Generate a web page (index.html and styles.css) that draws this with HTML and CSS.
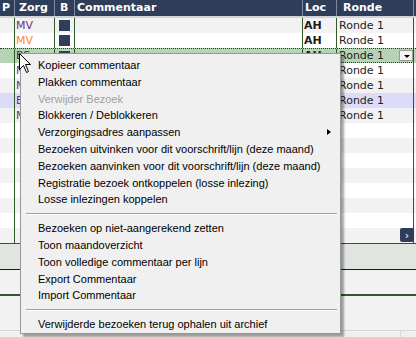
FILE: index.html
```html
<!DOCTYPE html>
<html lang="nl">
<head>
    <meta charset="UTF-8">
    <meta name="viewport" content="width=device-width, initial-scale=1.0">
    <title>Bezoeken</title>
    <link rel="stylesheet" href="styles.css">
</head>
<body>
    <div class="screen">
        <div class="grid">
            <div class="row head">
                <div class="cell c-p">P</div>
                <div class="cell c-zorg">Zorg</div>
                <div class="cell c-b">B</div>
                <div class="cell c-comm">Commentaar</div>
                <div class="cell c-loc">Loc</div>
                <div class="cell c-ronde">Ronde</div>
                <div class="cell c-fill"></div>
            </div>

            <div class="row odd">
                <div class="cell"></div>
                <div class="cell zorg purple">MV</div>
                <div class="cell box"><span class="check"></span></div>
                <div class="cell"></div>
                <div class="cell loc">AH</div>
                <div class="cell ronde">Ronde 1</div>
                <div class="cell c-fill"></div>
            </div>
            <div class="row">
                <div class="cell"></div>
                <div class="cell zorg orange">MV</div>
                <div class="cell box"><span class="check"></span></div>
                <div class="cell"></div>
                <div class="cell loc">AH</div>
                <div class="cell ronde">Ronde 1</div>
                <div class="cell c-fill"></div>
            </div>
            <div class="row selected">
                <div class="cell"></div>
                <div class="cell zorg dark">BS</div>
                <div class="cell box"><span class="check"></span></div>
                <div class="cell"></div>
                <div class="cell loc">AH</div>
                <div class="cell ronde focus">Ronde 1<span class="drop"></span></div>
                <div class="cell c-fill"></div>
            </div>
            <div class="row">
                <div class="cell"></div>
                <div class="cell zorg purple">MV</div>
                <div class="cell box"><span class="check"></span></div>
                <div class="cell"></div>
                <div class="cell loc">AH</div>
                <div class="cell ronde">Ronde 1</div>
                <div class="cell c-fill"></div>
            </div>
            <div class="row odd">
                <div class="cell"></div>
                <div class="cell zorg purple">MV</div>
                <div class="cell box"><span class="check"></span></div>
                <div class="cell"></div>
                <div class="cell loc">AH</div>
                <div class="cell ronde">Ronde 1</div>
                <div class="cell c-fill"></div>
            </div>
            <div class="row today">
                <div class="cell"></div>
                <div class="cell zorg purple">EV</div>
                <div class="cell box"><span class="check"></span></div>
                <div class="cell"></div>
                <div class="cell loc">AH</div>
                <div class="cell ronde">Ronde 1</div>
                <div class="cell c-fill"></div>
            </div>
            <div class="row odd">
                <div class="cell"></div>
                <div class="cell zorg purple">MV</div>
                <div class="cell box"><span class="check"></span></div>
                <div class="cell"></div>
                <div class="cell loc">AH</div>
                <div class="cell ronde">Ronde 1</div>
                <div class="cell c-fill"></div>
            </div>
            <div class="row"><div class="cell"></div><div class="cell"></div><div class="cell"></div><div class="cell"></div><div class="cell"></div><div class="cell"></div><div class="cell c-fill"></div></div>
            <div class="row odd"><div class="cell"></div><div class="cell"></div><div class="cell"></div><div class="cell"></div><div class="cell"></div><div class="cell"></div><div class="cell c-fill"></div></div>
            <div class="row"><div class="cell"></div><div class="cell"></div><div class="cell"></div><div class="cell"></div><div class="cell"></div><div class="cell"></div><div class="cell c-fill"></div></div>
            <div class="row odd"><div class="cell"></div><div class="cell"></div><div class="cell"></div><div class="cell"></div><div class="cell"></div><div class="cell"></div><div class="cell c-fill"></div></div>
            <div class="row"><div class="cell"></div><div class="cell"></div><div class="cell"></div><div class="cell"></div><div class="cell"></div><div class="cell"></div><div class="cell c-fill"></div></div>
            <div class="row odd"><div class="cell"></div><div class="cell"></div><div class="cell"></div><div class="cell"></div><div class="cell"></div><div class="cell"></div><div class="cell c-fill"></div></div>
            <div class="row"><div class="cell"></div><div class="cell"></div><div class="cell"></div><div class="cell"></div><div class="cell"></div><div class="cell"></div><div class="cell c-fill"></div></div>
            <div class="row odd"><div class="cell"></div><div class="cell"></div><div class="cell"></div><div class="cell"></div><div class="cell"></div><div class="cell"></div><div class="cell c-fill"></div></div>

            <button class="scroll-next">&rsaquo;</button>
        </div>

        <div class="rule-green"></div>
        <div class="panel"></div>
        <div class="rule-black"></div>
        <div class="blank"></div>
        <div class="rule-green thick"></div>
        <div class="footer">
            <div class="footer-top"></div>
            <div class="footer-bar">
                <div class="footer-main"></div>
                <div class="footer-end"></div>
            </div>
        </div>

        <!-- contextmenu -->
        <ul class="menu">
            <li>Kopieer commentaar</li>
            <li>Plakken commentaar</li>
            <li class="disabled">Verwijder Bezoek</li>
            <li>Blokkeren / Deblokkeren</li>
            <li class="sub">Verzorgingsadres aanpassen</li>
            <li>Bezoeken uitvinken voor dit voorschrift/lijn (deze maand)</li>
            <li>Bezoeken aanvinken voor dit voorschrift/lijn (deze maand)</li>
            <li>Registratie bezoek ontkoppelen (losse inlezing)</li>
            <li>Losse inlezingen koppelen</li>
            <li class="sep"></li>
            <li>Bezoeken op niet-aangerekend zetten</li>
            <li>Toon maandoverzicht</li>
            <li>Toon volledige commentaar per lijn</li>
            <li>Export Commentaar</li>
            <li>Import Commentaar</li>
            <li class="sep"></li>
            <li>Verwijderde bezoeken terug ophalen uit archief</li>
        </ul>

        <svg class="cursor" width="13" height="21" viewBox="0 0 13 21">
            <path d="M0.5 0.5 L0.5 16.5 L4.5 12.5 L7.5 19.5 L9.5 18.5 L6.5 11.5 L11.5 11.5 Z" fill="#fff" stroke="#000" stroke-width="1"/>
        </svg>
    </div>
</body>
</html>
```

FILE: styles.css
```css
:root {
    --navy: #2e3d59;
    --grid-line: #2d5a27;
    --stripe: #f2f2f2;
    --selected: #b6d3b6;
    --today: #dcdcf8;
    --purple: #6e2f8c;
    --orange: #ff8a24;
}
body {
    margin: 0;
    background-color: #f0f0f0;
    font-family: "DejaVu Sans", Verdana, sans-serif;
    font-size: 11px;
    color: #222;
}
.screen {
    position: relative;
    width: 416px;
    height: 337px;
    overflow: hidden;
    display: flex;
    flex-direction: column;
}
.grid {
    position: relative;
    height: 243px;
    background-color: white;
}
.row {
    display: grid;
    grid-template-columns: 15px 40px 20px 228px 34px 77px 2px;
    height: 15px;
    line-height: 15px;
    background-color: white;
}
.row.odd {
    background-color: var(--stripe);
}
.row.today {
    background-color: var(--today);
}
.row.selected {
    background-color: var(--selected);
    border-top: 1px dotted #333;
    height: 14px;
    line-height: 14px;
}
.cell {
    box-sizing: border-box;
    border-right: 1px solid var(--grid-line);
    white-space: nowrap;
    overflow: hidden;
    position: relative;
}
.cell.c-fill {
    border-right: none;
}
.row.head {
    height: 18px;
    line-height: 16px;
    background-color: var(--navy);
    border-bottom: 2px solid #cfd3d8;
    box-sizing: border-box;
    color: white;
    font-weight: bold;
}
.row.head .cell {
    border-right: 1px solid #7f8aa0;
}
.row.head .c-p { padding-left: 2px; }
.row.head .c-zorg { padding-left: 4px; }
.row.head .c-b { padding-left: 5px; }
.row.head .c-comm { padding-left: 2px; }
.row.head .c-loc { padding-left: 2px; }
.row.head .c-ronde { padding-left: 6px; }
.row.head .c-fill { border-right: none; }

.zorg { padding-left: 1px; }
.purple { color: var(--purple); }
.orange { color: var(--orange); }
.dark { color: #333; }
.box {
    display: flex;
    align-items: center;
    justify-content: center;
}
.check {
    display: block;
    width: 11px;
    height: 11px;
    background-color: var(--navy);
    margin-right: 1px;
}
.loc {
    padding-left: 1px;
    font-weight: bold;
    color: #1c1c1c;
}
.ronde {
    padding-left: 2px;
}
.ronde.focus {
    border-bottom: 1px dotted #333;
}
.drop {
    position: absolute;
    right: 0;
    top: 1px;
    width: 14px;
    height: 11px;
    box-sizing: border-box;
    background-color: #f4f4f4;
    border: 1px solid #9a9a9a;
}
.drop::after {
    content: "";
    position: absolute;
    left: 4px;
    top: 4px;
    border-left: 3px solid transparent;
    border-right: 3px solid transparent;
    border-top: 3px solid #000;
}
.scroll-next {
    position: absolute;
    right: 2px;
    bottom: 1px;
    width: 14px;
    height: 14px;
    padding: 0;
    border: none;
    border-radius: 2px;
    background-color: var(--navy);
    color: white;
    font-family: "DejaVu Sans", sans-serif;
    font-size: 11px;
    line-height: 13px;
}

.rule-green {
    height: 1px;
    background-color: var(--grid-line);
}
.rule-green.thick {
    height: 2px;
}
.panel {
    height: 25px;
    background-color: #e0e5e0;
}
.rule-black {
    height: 1px;
    background-color: #1a1a1a;
}
.blank {
    height: 24px;
    background-color: var(--stripe);
}
.footer {
    flex: 1;
    display: flex;
    flex-direction: column;
}
.footer-top {
    height: 34px;
    background-color: var(--stripe);
    border-bottom: 1px solid #d6d6d6;
}
.footer-bar {
    flex: 1;
    display: flex;
    background-color: #f0f0f0;
}
.footer-main {
    width: 400px;
    border-right: 1px solid #d6d6d6;
}

.menu {
    position: absolute;
    left: 20px;
    top: 53px;
    width: 321px;
    height: 281px;
    box-sizing: border-box;
    margin: 0;
    padding: 3px 0 0;
    list-style: none;
    background-color: #f0f0f0;
    border: 1px solid #979797;
    box-shadow: 3px 3px 2px rgba(0, 0, 0, 0.35);
    font-family: "Liberation Sans", Arial, sans-serif;
    font-size: 11px;
    color: #000;
}
.menu li {
    position: relative;
    height: 16.8px;
    line-height: 17px;
    padding-left: 17px;
    white-space: nowrap;
}
.menu li.disabled {
    color: #a0a0a0;
}
.menu li.sub::after {
    content: "";
    position: absolute;
    right: 9px;
    top: 5px;
    border-top: 3.5px solid transparent;
    border-bottom: 3.5px solid transparent;
    border-left: 4px solid #000;
}
.menu li.sep {
    height: 12px;
    padding: 0;
    margin: 0 3px 0 5px;
}
.menu li.sep::before {
    content: "";
    position: absolute;
    left: 0;
    right: 0;
    top: 5px;
    height: 1px;
    background-color: #a0a0a0;
    border-bottom: 1px solid white;
}
.cursor {
    position: absolute;
    left: 19px;
    top: 53px;
}
```
